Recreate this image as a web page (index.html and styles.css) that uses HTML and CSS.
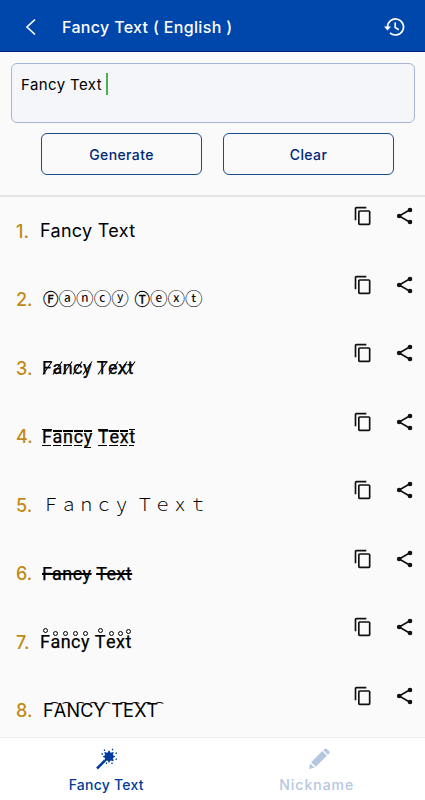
FILE: index.html
```html
<!DOCTYPE html>
<html lang="en">
<head>
<meta charset="utf-8">
<title>Fancy Text</title>
<link rel="stylesheet" href="styles.css">
</head>
<body>
<svg class="defs" width="0" height="0" aria-hidden="true">
  <symbol id="copy" viewBox="0 0 24 24"><path d="M16 1H4c-1.1 0-2 .9-2 2v14h2V3h12V1zm3 4H8c-1.1 0-2 .9-2 2v14c0 1.1.9 2 2 2h11c1.1 0 2-.9 2-2V7c0-1.1-.9-2-2-2zm0 16H8V7h11v14z"/></symbol>
  <symbol id="share" viewBox="0 0 24 24"><path d="M5 12 18 4.500M5 12l13 7.500" fill="none" stroke="currentColor" stroke-width="1.900"/><circle cx="5" cy="12" r="2.800"/><circle cx="18" cy="4.800" r="2.800"/><circle cx="18" cy="19.200" r="2.800"/></symbol>
</svg>
<header class="bar">
  <svg class="back" viewBox="0 0 12 18"><path d="M10 1.5 2 9l8 7.500"/></svg>
  <h1>Fancy Text ( English )</h1>
  <svg class="history" viewBox="0 0 21 20"><path d="M3.500 10A8 8 0 1 1 6 15.800M11.200 5.500v5l3.600 2.200" fill="none" stroke="#fff" stroke-width="1.700"/><path d="M0 9.500h7L3.500 13.500z" fill="#fff"/></svg>
</header>
<section class="editor">
  <div class="field">Fancy Text<i class="caret"></i></div>
  <div class="buttons"><button class="generate">Generate</button><button class="clear">Clear</button></div>
</section>
<main class="list">
  <div class="row"><b>1.</b><span class="plain">Fancy Text</span><svg class="copy"><use href="#copy"/></svg><svg class="share"><use href="#share"/></svg></div>
  <div class="row"><b>2.</b><span class="circled"><em>Ⓕ</em>ⓐⓝⓒⓨ<i class="gap"> </i><em>Ⓣ</em>ⓔⓧⓣ</span><svg class="copy"><use href="#copy"/></svg><svg class="share"><use href="#share"/></svg></div>
  <div class="row"><b>3.</b><span class="marked slashed"><u class="cap">F</u><u>a</u><u>n</u><u>c</u><u>y</u> <u class="cap">T</u><u>e</u><u>x</u><u>t</u></span><svg class="copy"><use href="#copy"/></svg><svg class="share"><use href="#share"/></svg></div>
  <div class="row"><b>4.</b><span class="marked lined"><u class="cap">F</u><u>a</u><u>n</u><u>c</u><u class="low">y</u> <u class="cap">T</u><u>e</u><u>x</u><u class="tall">t</u></span><svg class="copy"><use href="#copy"/></svg><svg class="share"><use href="#share"/></svg></div>
  <div class="row"><b>5.</b><span class="wide">Ｆａｎｃｙ<i class="gap"> </i>Ｔｅｘｔ</span><svg class="copy"><use href="#copy"/></svg><svg class="share"><use href="#share"/></svg></div>
  <div class="row"><b>6.</b><span class="marked struck"><s>Fancy</s> <s>Text</s></span><svg class="copy"><use href="#copy"/></svg><svg class="share"><use href="#share"/></svg></div>
  <div class="row"><b>7.</b><span class="marked rings"><u class="cap">F</u><u>a</u><u>n</u><u>c</u><u>y</u> <u class="cap">T</u><u>e</u><u>x</u><u class="tall">t</u></span><svg class="copy"><use href="#copy"/></svg><svg class="share"><use href="#share"/></svg></div>
  <div class="row"><b>8.</b><span class="marked arcs"><u>F</u><u>A</u><u>N</u><u>C</u><u>Y</u> <u>T</u><u>E</u><u>X</u><u>T</u></span><svg class="copy"><use href="#copy"/></svg><svg class="share"><use href="#share"/></svg></div>
</main>
<nav class="tabs">
  <div class="tab active"><svg viewBox="0 0 22 22"><path d="M2 20.500 10 12.500" stroke="currentColor" stroke-width="2.500"/><path d="m14 2 1.500 2.800 3.200-.8-.8 3.200L20.500 8.500l-2.600 1.500.8 3.200-3.200-.8L14 15l-1.500-2.600-3.200.8.8-3.200L7.500 8.500l2.600-1.300L9.300 4l3.200.8z"/><path d="M9.500 1.500v1.500M17.500.8v1.500M20.500 5.200h1.500M20.500 11.200h1.500M17 14.500V16M6.500 6H8M11.500 14.500V16" stroke="currentColor" stroke-width="1.300"/></svg><span>Fancy Text</span></div>
  <div class="tab muted"><svg viewBox="0 0 22 22"><path d="m1 21 1.300-5.500 4.200 4.200zM3.200 14.200 14.300 3.100l4.600 4.600L7.800 18.800zM15.300 2.200l1.200-1.200c.7-.7 1.600-.7 2.300 0l2.300 2.300c.7.7.7 1.600 0 2.300l-1.200 1.200z"/></svg><span>Nickname</span></div>
</nav>
</body>
</html>
```
FILE: styles.css
```css
*, ::before, ::after { box-sizing: border-box; }
body { margin: 0; width: 425px; height: 800px; overflow: hidden; display: flex; flex-direction: column; background: #fafafa; font-family: Inter, sans-serif; color: #000; }
svg { fill: currentColor; flex: none; }
.defs { position: absolute; }
.bar { height: 52px; flex: none; display: flex; align-items: center; padding: 2px 20px 0 25px; background: #0047ab; border-bottom: 1px solid #001c7c; color: #fff; }
.back { width: 12px; height: 18px; fill: none; stroke: #fff; stroke-width: 1.7; }
.bar h1 { margin: 0 auto 0 25px; font-size: 16px; font-weight: 500; letter-spacing: .33px; padding-top: 1px; white-space: pre; }
.history { width: 21px; height: 20px; }
.editor { height: 145px; flex: none; padding: 11px 10px 0 11px; border-bottom: 2px solid #e4e4e4; }
.field { height: 60px; display: flex; align-items: flex-start; padding: 9px; border: 1px solid #a5b7d2; border-radius: 6px; background: #f4f6f9; font-size: 15px; line-height: 24px; letter-spacing: .4px; }
.caret { width: 2px; height: 22px; margin-left: 4px; background: #4caf50; }
.buttons { display: flex; gap: 21px; padding: 10px 0 0 30px; }
button { height: 42px; padding: 0; border: 1px solid #184b91; border-radius: 6px; background: transparent; color: #002878; font: 500 14px Inter, sans-serif; letter-spacing: .4px; }
.generate { width: 161px; }
.clear { width: 171px; }
.list { height: 540px; flex: none; overflow: hidden; }
.row { height: 68.5px; display: flex; align-items: center; padding: 0 10px 0 16px; color: #111; }
.row b { width: 24px; flex: none; color: #c08a16; font-size: 18px; font-weight: 500; }
.row > span { flex: 1; height: 28px; line-height: 28px; white-space: pre; color: #000; }
.row > svg { width: 20px; height: 20px; margin-bottom: 30px; }
.row > .share { width: 20px; margin-left: 22px; }
.plain { font-size: 18px; letter-spacing: .3px; }
.marked { font: 400 18px Roboto, sans-serif; letter-spacing: .45px; -webkit-text-stroke: .25px #000; padding-left: 2px; }
.marked u { position: relative; display: inline-block; text-decoration: none; }
.marked u::before, .marked u::after { position: absolute; }
.slashed u::before { content: ""; left: 45%; top: 6px; width: 1px; height: 16px; background: #000; transform: rotate(35deg); }
.lined { letter-spacing: .65px; }
.lined u::before { content: ""; left: 0; right: 1px; top: 7.5px; height: 1.4px; background: #000; }
.lined u::after { content: ""; left: 0; right: 2px; top: 22px; height: 1.4px; background: #000; }
.lined u.cap::before { top: 6px; }
.lined u.tall::before { top: 6px; }
.lined u.low::after { top: 24px; }
.struck s { text-decoration: line-through 1.5px; }
.rings { padding-left: 0; }
.rings u::before { content: ""; left: calc(50% - 2.5px); top: 3px; width: 5px; height: 5px; border: 1px solid #000; border-radius: 50%; }
.rings u.cap::before { top: 0; }
.rings u.tall::before { top: 1px; }
.arcs { font-family: Inter, sans-serif; letter-spacing: .2px; padding-left: 3px; -webkit-text-stroke: 0; }
.arcs u::before { content: ""; left: 60%; top: 5px; width: 11px; height: 7px; border: 1.3px solid transparent; border-top-color: #000; border-radius: 50%; }
.circled { font: 17.6px "Noto Sans CJK JP", sans-serif; padding-left: 3px; margin-bottom: 4px; }
.circled em { font-style: normal; font-size: 15.5px; -webkit-text-stroke: .3px #000; }
.wide { font: 300 17.7px "Noto Sans CJK JP", sans-serif; padding-left: 2px; margin-bottom: 4px; }
.gap { display: inline-block; width: 5.5px; }
.tabs { height: 63px; flex: none; display: flex; background: #fff; border-top: 1px solid #eee; }
.tab { width: 212.5px; display: flex; flex-direction: column; align-items: center; padding-top: 10px; color: #b5c7df; font-size: 14px; font-weight: 500; letter-spacing: .25px; }
.tab.active { color: #003c9b; }
.muted span { margin-left: -4px; letter-spacing: 1px; }
.tab svg { width: 22px; height: 22px; }
.tab span { margin-top: 5px; line-height: 20px; }
```
